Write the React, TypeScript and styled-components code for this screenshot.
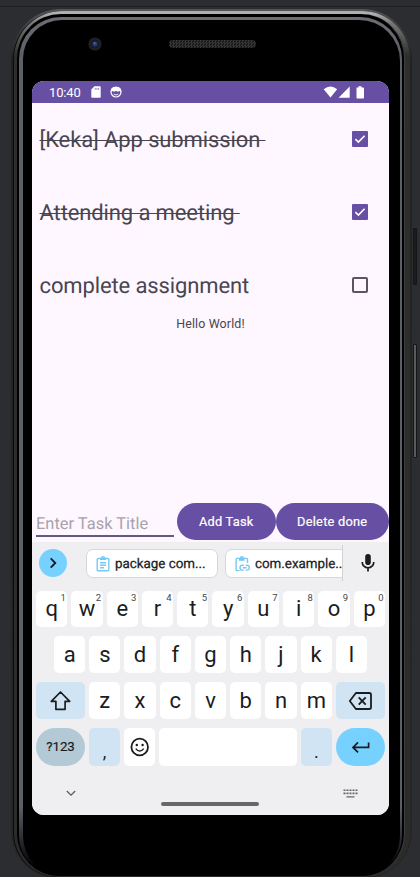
import React from "react";
import styled, { createGlobalStyle, css } from "styled-components";

const Global = createGlobalStyle`
  * { box-sizing: border-box; }
  html, body { margin: 0; background: #2b2d30; }
  body { font-family: Roboto, "Noto Sans", sans-serif; overflow: hidden; }
  svg { display: block; flex: none; }
`;

/* ---------- device ---------- */
const Stage = styled.div`
  width: 420px;
  height: 877px;
  padding: 9px 0 0 11px;
  overflow: hidden;
  position: relative;
  background: linear-gradient(#2b2d30 0 6px, #1e1f22 6px 7px, #2b2d30 7px);
`;
const Shell = styled.div`
  width: 401px;
  height: 869px;
  padding: 2px 2px 1px 2px;
  border-radius: 50px 50px 46px 46px;
  background: linear-gradient(#55555a 0, #3a3a3a 20px, #222 50px, #262626 100%);
`;
const Chrome = styled.div`
  height: 100%;
  padding: 3px 5px 1px 4px;
  border-radius: 48px 48px 44px 44px;
  background: linear-gradient(#a8a8a8 0, #b4b4b4 2px, #777 12px, #2e2e2e 45px, #2b2b2b 100%);
  box-shadow: inset 1px 0 0 #0a0a0a;
`;
const Groove = styled.div`
  height: 100%;
  padding: 3px 2px 0 2px;
  border-radius: 44px 44px 42px 42px;
  background: #000;
  border-right: 1px solid #3f3f42;
`;
const Rim = styled.div`
  height: 100%;
  padding: 3px 2px 0 4px;
  border-radius: 42px 42px 40px 40px;
  background: linear-gradient(#6c6e73 0, #5b5f66 40px, #5b5f66 790px, #000 850px);
`;
const Face = styled.div`
  height: 100%;
  padding: 0 11px 0 9px;
  border-radius: 39px 41px 40px 40px;
  background: #000;
`;
const Earpiece = styled.div`
  height: 61px;
  padding: 17px 0 0 56px;
  display: flex;
`;
const Speaker = styled.div`
  width: 87px;
  height: 8px;
  margin: 3px 0 0 67px;
  border-radius: 4px;
  background: repeating-conic-gradient(#353535 0 25%, #1a1a1a 0 50%) 0 0 / 3px 3px;
`;
const SideButton = styled.div<{ $top: number; $height: number; $bright?: boolean }>`
  position: absolute;
  left: 413px;
  top: ${(p) => p.$top}px;
  width: 4px;
  height: ${(p) => p.$height}px;
  border-radius: 1px;
  background: ${(p) => (p.$bright ? "#5a5a5a" : "#1c1c1d")};
  border: 1px solid #151515;
`;

/* ---------- app ---------- */
const Screen = styled.div`
  width: 357px;
  height: 734px;
  border-radius: 12px;
  overflow: hidden;
  display: flex;
  flex-direction: column;
  background: #fef7ff;
`;
const StatusBar = styled.div`
  height: 22px;
  flex: none;
  padding: 0 25px 0 17px;
  display: flex;
  align-items: center;
  background: #6750a4;
  color: #fff;
  font-size: 13px;
`;
const Clock = styled.span`
  width: 42px;
  letter-spacing: -0.15px;
`;
const StatusIcons = styled.div<{ $end?: boolean }>`
  display: flex;
  align-items: center;
  gap: 9px;
  ${(p) => p.$end && css`margin-left: auto;`}
`;
const TaskRow = styled.div`
  height: 73px;
  flex: none;
  padding: 0 20px 1px 7.5px;
  display: flex;
  align-items: center;
  justify-content: space-between;
`;
const TaskTitle = styled.span<{ $done: boolean }>`
  font-size: 22px;
  line-height: 28px;
  margin-top: 4px;
  letter-spacing: -0.12px;
  text-rendering: geometricPrecision;
  white-space: pre;
  color: #49454f;
  text-decoration: ${(p) => (p.$done ? "line-through 1px" : "none")};
`;
const CheckBox = styled.div<{ $checked: boolean }>`
  width: 16px;
  height: 16px;
  margin-right: 1px;
  display: flex;
  align-items: center;
  justify-content: center;
  border-radius: ${(p) => (p.$checked ? 1 : 2)}px;
  border: ${(p) => (p.$checked ? "none" : "2px solid #5a5660")};
  background: ${(p) => (p.$checked ? "#6750a4" : "transparent")};
`;
const Greeting = styled.div`
  height: 14px;
  margin-top: -5px;
  text-align: center;
  font-size: 12.4px;
  line-height: 14px;
  letter-spacing: 0.15px;
  color: #49454f;
`;
const EntryRow = styled.div`
  margin-top: auto;
  height: 39px;
  flex: none;
  padding-left: 4px;
  display: flex;
`;
const Field = styled.div`
  width: 137.5px;
  height: 34px;
  margin-right: 3.5px;
  padding-top: 12px;
  border-bottom: 2px solid #625b80;
  font-size: 16.4px;
  line-height: 20px;
  letter-spacing: 0.02px;
  text-rendering: geometricPrecision;
  color: #a8a2ab;
`;
const PillButton = styled.div<{ $width: number }>`
  width: ${(p) => p.$width}px;
  height: 37px;
  display: flex;
  align-items: center;
  justify-content: center;
  border-radius: 19px;
  background: #6750a4;
  color: #fff;
  font-size: 12.8px;
  -webkit-text-stroke: 0.2px #fff;
  letter-spacing: 0.25px;
`;

/* ---------- keyboard ---------- */
const Keyboard = styled.div`
  height: 273px;
  flex: none;
  background: #efeff1;
  color: #1a1c1e;
`;
const Suggestions = styled.div`
  height: 49px;
  padding: 3px 0 0 7px;
  display: flex;
`;
const Expand = styled.div`
  width: 28px;
  height: 28px;
  margin: 4px 19px 0 0;
  display: grid;
  place-items: center;
  border-radius: 50%;
  background: #76d1ff;
`;
const ChipTrack = styled.div`
  width: 257px;
  height: 36px;
  padding-top: 4px;
  display: flex;
  gap: 7px;
  overflow: hidden;
  border-right: 1px solid #d2d2d4;
`;
const Chip = styled.div`
  width: 132px;
  height: 29px;
  flex: none;
  padding: 1px 0 0 9px;
  display: flex;
  align-items: center;
  gap: 5px;
  border: 1px solid #d6d7da;
  border-radius: 7px;
  background: #fff;
  font-size: 13.4px;
  -webkit-text-stroke: 0.25px #1a1c1e;
  letter-spacing: -0.02px;
  text-rendering: geometricPrecision;
  white-space: nowrap;
`;
const Mic = styled.div`
  padding: 8px 0 0 16px;
`;
const KeyRow = styled.div<{ $inset?: number; $height?: number }>`
  height: ${(p) => p.$height ?? 37}px;
  margin: 0 ${(p) => p.$inset ?? 4}px 9px;
  display: flex;
  gap: 4px;
`;
const Key = styled.div<{ $tone?: string; $wide?: number; $round?: boolean }>`
  position: relative;
  flex: ${(p) => (p.$wide ? `0 0 ${p.$wide}px` : "1 1 0")};
  display: flex;
  align-items: center;
  justify-content: center;
  border-radius: ${(p) => (p.$round ? 19 : 5)}px;
  background: ${(p) => p.$tone ?? "#fff"};
  font-size: 22px;
  line-height: 24px;
`;
const Hint = styled.span`
  position: absolute;
  top: 2px;
  right: 1.5px;
  font-size: 9.5px;
  line-height: 10px;
  color: #44474a;
`;
const ModeLabel = styled.span`
  font-size: 13.3px;
  -webkit-text-stroke: 0.2px #1a1c1e;
`;
const Punctuation = styled.span`
  margin-top: 9px;
  font-size: 18px;
`;
const NavBar = styled.div`
  height: 38px;
  padding: 0 31px 2px 34px;
  display: flex;
  align-items: center;
  justify-content: space-between;
`;
const HomeHandle = styled.div`
  width: 98px;
  height: 4px;
  margin: 22px 0 0 1px;
  border-radius: 2px;
  background: #676767;
`;

const BLUE = "#d1e4f3";

const Camera = () => (
  <svg width="14" height="14" viewBox="0 0 14 14">
    <circle cx="7" cy="7" r="6.6" fill="#202124" />
    <circle cx="7" cy="7" r="4" fill="#141a30" />
    <circle cx="7" cy="7" r="2.5" fill="#2a3a70" />
    <circle cx="6.5" cy="6.3" r="1" fill="#5570b0" />
  </svg>
);
const SdCard = () => (
  <svg width="10" height="12" viewBox="0 0 10 12">
    <path d="M3.4 0.3H9a.7.7 0 0 1 .7.7v10a.7.7 0 0 1-.7.7H1a.7.7 0 0 1-.7-.7V3.6z" fill="#fff" />
    <path d="M4.2 2v1.8M5.9 2v1.8M7.6 2v1.8" stroke="#6750a4" strokeWidth=".7" />
  </svg>
);
const FaceBadge = () => (
  <svg width="12" height="12" viewBox="0 0 12 12">
    <circle cx="6" cy="6" r="5" fill="none" stroke="#fff" strokeWidth="1.2" />
    <path d="M1.2 2.9 3.5 1h5l2.3 1.9.5 3.2-1.8-1-1.8.7-1.7-1-1.7 1-1.8-.7-1.8 1z" fill="#fff" />
    <path d="M3.8 8.1q2.2 2 4.4 0" fill="none" stroke="#fff" strokeWidth=".9" />
  </svg>
);
const Signals = () => (
  <svg width="41" height="13" viewBox="0 0 41 13">
    <path d="M0.7 3.2Q7.5 -2 14.2 3.2L7.5 11.6z" fill="#fff" />
    <path d="M15.6 11.8 26.7 0.6V11.8z" fill="#fff" />
    <path d="M33.7 1.6h1.8V.3h3v1.3h1.8q.7 0 .7.7v9.4q0 .7-.7.7h-6.1q-.7 0-.7-.7v-9.4z" fill="#fff" />
  </svg>
);
const Check = () => (
  <svg width="12" height="12" viewBox="0 0 12 12">
    <path d="M1.4 6.1 4.4 9 10.6 2.7" fill="none" stroke="#fff" strokeWidth="1.6" />
  </svg>
);
const ChevronRight = () => (
  <svg width="12" height="12" viewBox="0 0 12 12">
    <path d="M3.7 1.4 8.3 6 3.7 10.6" fill="none" stroke="#101c24" strokeWidth="1.8" />
  </svg>
);
const Clipboard = () => (
  <svg width="14" height="16" viewBox="0 0 14 16" fill="none" stroke="#76c9f5" strokeWidth="1.4">
    <rect x="1.2" y="2.5" width="11.6" height="12.3" rx="1" />
    <path d="M4 3.4h6M4 6.7h6M4 9.2h6M4 11.7h4" />
    <path d="M5.5 2.2a1.5 1.5 0 0 1 3 0" />
  </svg>
);
const ClipboardLink = () => (
  <svg width="15" height="16" viewBox="0 0 15 16" fill="none" stroke="#76c9f5" strokeWidth="1.4">
    <path d="M4.5 14.6H2q-.9 0-.9-.9V3.3q0-.9.9-.9h9.6q.9 0 .9.9V7" />
    <path d="M4 3.6h5.6" strokeWidth="2.4" />
    <path d="M5.4 2.2a1.5 1.5 0 0 1 3 0" />
    <path d="M8.8 9.3H7.4a2.4 2.4 0 0 0 0 4.8h1.4M10.6 9.3H12a2.4 2.4 0 0 1 0 4.8h-1.4M7.8 11.7h3.8" />
  </svg>
);
const MicIcon = () => (
  <svg width="18" height="20" viewBox="0 0 18 20">
    <rect x="6.2" y="1" width="5.6" height="11" rx="2.8" fill="#1a1c1e" />
    <path d="M3.2 9a5.8 5.8 0 0 0 11.6 0M9 15v3.5" fill="none" stroke="#1a1c1e" strokeWidth="1.7" />
  </svg>
);
const Shift = () => (
  <svg width="22" height="22" viewBox="0 0 22 22">
    <path d="M10.5 2 1.3 11.3H5.9V19.3H15.1V11.3H19.7z" fill="none" stroke="#1a1c1e" strokeWidth="1.7" strokeLinejoin="round" />
  </svg>
);
const Backspace = () => (
  <svg width="24" height="20" viewBox="0 0 24 20" fill="none" stroke="#1a1c1e" strokeWidth="1.8" strokeLinejoin="round">
    <path d="M7.9 2H21.3q1.7 0 1.7 1.7V16.3q0 1.7-1.7 1.7H7.9L1.8 10z" />
    <path d="M10.7 6.3 17.7 13.7M17.7 6.3 10.7 13.7" />
  </svg>
);
const Smile = () => (
  <svg width="20" height="20" viewBox="0 0 20 20">
    <circle cx="9.7" cy="10" r="8.3" fill="none" stroke="#1a1c1e" strokeWidth="1.8" />
    <circle cx="6.8" cy="8" r="1.2" fill="#1a1c1e" />
    <circle cx="12.6" cy="8" r="1.2" fill="#1a1c1e" />
    <path d="M5.7 11.6q4 5 8 0" fill="none" stroke="#1a1c1e" strokeWidth="1.5" />
  </svg>
);
const Enter = () => (
  <svg width="20" height="14" viewBox="0 0 20 14">
    <path d="M17.6 2.6V7.4H2.2M7 2.4 2 7.4 7 12.4" fill="none" stroke="#1a1c1e" strokeWidth="1.7" />
  </svg>
);
const ChevronDown = () => (
  <svg width="10" height="8" viewBox="0 0 10 8">
    <path d="M.8 2 5 6.2 9.2 2" fill="none" stroke="#5c5e60" strokeWidth="1.3" />
  </svg>
);
const KeyboardIcon = () => (
  <svg width="15" height="9" viewBox="0 0 15 9">
    <path d="M.5 1.2h14M.5 4.4h14" stroke="#626466" strokeWidth="1.6" strokeDasharray="2 1" />
    <path d="M3.5 7.8h8" stroke="#626466" strokeWidth="1.2" />
  </svg>
);

const tasks = [
  { title: "[Keka] App submission ", done: true },
  { title: "Attending a meeting ", done: true },
  { title: "complete assignment", done: false },
];

export default function App() {
  return (
    <>
      <Global />
      <Stage>
        <SideButton $top={228} $height={57} />
        <SideButton $top={344} $height={114} $bright />
        <Shell>
          <Chrome>
            <Groove>
              <Rim>
                <Face>
                  <Earpiece>
                    <Camera />
                    <Speaker />
                  </Earpiece>
                  <Screen>
                    <StatusBar>
                      <Clock>10:40</Clock>
                      <StatusIcons>
                        <SdCard />
                        <FaceBadge />
                      </StatusIcons>
                      <StatusIcons $end>
                        <Signals />
                      </StatusIcons>
                    </StatusBar>
                    {tasks.map((t) => (
                      <TaskRow key={t.title}>
                        <TaskTitle $done={t.done}>{t.title}</TaskTitle>
                        <CheckBox $checked={t.done}>{t.done && <Check />}</CheckBox>
                      </TaskRow>
                    ))}
                    <Greeting>Hello World!</Greeting>
                    <EntryRow>
                      <Field>Enter Task Title</Field>
                      <PillButton $width={98.5}>Add Task</PillButton>
                      <PillButton $width={113.5}>Delete done</PillButton>
                    </EntryRow>
                    <Keyboard>
                      <Suggestions>
                        <Expand>
                          <ChevronRight />
                        </Expand>
                        <ChipTrack>
                          <Chip>
                            <Clipboard />
                            package com...
                          </Chip>
                          <Chip>
                            <ClipboardLink />
                            com.example..
                          </Chip>
                        </ChipTrack>
                        <Mic>
                          <MicIcon />
                        </Mic>
                      </Suggestions>
                      <KeyRow $height={36}>
                        {[..."qwertyuiop"].map((k, i) => (
                          <Key key={k}>
                            {k}
                            <Hint>{(i + 1) % 10}</Hint>
                          </Key>
                        ))}
                      </KeyRow>
                      <KeyRow $inset={22}>
                        {[..."asdfghjkl"].map((k) => (
                          <Key key={k}>{k}</Key>
                        ))}
                      </KeyRow>
                      <KeyRow>
                        <Key $wide={49} $tone={BLUE}>
                          <Shift />
                        </Key>
                        {[..."zxcvbnm"].map((k) => (
                          <Key key={k}>{k}</Key>
                        ))}
                        <Key $wide={49} $tone={BLUE}>
                          <Backspace />
                        </Key>
                      </KeyRow>
                      <KeyRow $height={38}>
                        <Key $wide={49} $tone="#b3c9d6" $round>
                          <ModeLabel>?123</ModeLabel>
                        </Key>
                        <Key $wide={31} $tone={BLUE}>
                          <Punctuation>,</Punctuation>
                        </Key>
                        <Key $wide={31}>
                          <Smile />
                        </Key>
                        <Key />
                        <Key $wide={31.5} $tone={BLUE}>
                          <Punctuation>.</Punctuation>
                        </Key>
                        <Key $wide={49} $tone="#76d1ff" $round>
                          <Enter />
                        </Key>
                      </KeyRow>
                      <NavBar>
                        <ChevronDown />
                        <HomeHandle />
                        <KeyboardIcon />
                      </NavBar>
                    </Keyboard>
                  </Screen>
                </Face>
              </Rim>
            </Groove>
          </Chrome>
        </Shell>
      </Stage>
    </>
  );
}
